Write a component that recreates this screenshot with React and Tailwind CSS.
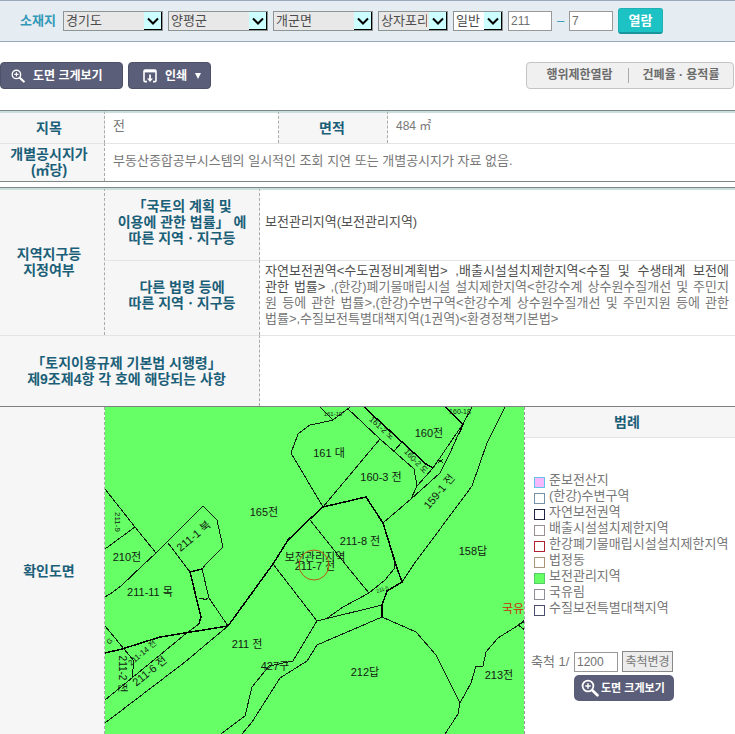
import React from 'react';

const regionSelects = [
  { id: 'sido', label: '시도', value: '경기도', className: 'w-[100px] bg-[#e8e8e8]' },
  { id: 'sigungu', label: '시군구', value: '양평군', className: 'w-[100px] bg-[#e8e8e8]' },
  { id: 'eupmyeon', label: '읍면동', value: '개군면', className: 'w-[100px] bg-[#e8e8e8]' },
  { id: 'ri', label: '리', value: '상자포리', className: 'w-[70px] bg-[#e8e8e8]' },
  { id: 'landType', label: '구분', value: '일반', className: 'w-[50px] bg-white' },
];

const legendItems = [
  { name: '준보전산지', box: 'border-[#62c4ea] bg-[#f5b8fb]' },
  { name: '(한강)수변구역', box: 'border-[#7391a8] bg-white' },
  { name: '자연보전권역', box: 'border-[#1d2440] bg-white' },
  { name: '배출시설설치제한지역', box: 'border-[#998f95] bg-white' },
  { name: '한강폐기물매립시설설치제한지역', box: 'border-[#b02030] bg-white' },
  { name: '법정동', box: 'border-[#a8957c] bg-white' },
  { name: '보전관리지역', box: 'border-[#55cc66] bg-[#66ff66]' },
  { name: '국유림', box: 'border-[#8f8f9c] bg-white' },
  { name: '수질보전특별대책지역', box: 'border-[#4c4c6e] bg-white' },
];

const parcelLines = [
  '105,489 135,527 156,553',
  '105,549 135,527',
  '105,597 113,592 121,586 143,565 156,553 203,506 217,520 223,547 206,564 202,569',
  '168,543 187,568 190,572',
  '202,569 209,598 228,626',
  '199,599 202,598 205,600 208,598',
  '199,624 188,632 105,700',
  '228,626 185,662 105,723',
  '105,626 134,661 132,678',
  '273,564 317,621',
  '310,520 350,570 369,593',
  '383,523 394,560 394,569 385,580 369,593 343,607 326,619',
  '317,621 382,605',
  '402,582 414,564 472,486 487,443 505,407',
  '317,621 293,661 269,666 252,687 245,716 221,734',
  '382,617 317,645 307,661 280,678 252,722 242,734',
  '382,617 416,632 436,655 446,675 460,703 458,714 445,734',
  '460,703 471,683 476,666 483,666 486,652 498,638 525,621',
  '525,620 518,625 525,630',
  '323,507 291,453 298,434 310,425 320,423 333,420 350,407',
  '320,407 333,420',
  '323,507 380,439',
  '347,408 380,439 414,469 417,486 411,499 383,523',
  '411,499 440,473 450,453 463,424 472,407',
  '402,442 394,451',
  '417,486 433,468 452,440 463,424',
  '438,459 443,463',
  '443,459 438,463',
];

const boldLines = [
  '190,572 202,569',
  '105,653 122,649 160,637 228,626',
  '190,572 201,617 199,624',
  '228,626 273,564 288,540 312,517 323,507 366,497 383,523 397,568 402,582 387,591 382,605 382,617',
  '364,407 402,442 426,464 433,468',
  '445,407 463,424 459,434',
];

const parcelLabels = [
  { text: '160전', x: 429, y: 437 },
  { text: '161 대', x: 329, y: 457 },
  { text: '160-3 전', x: 381, y: 481 },
  { text: '165전', x: 264, y: 516 },
  { text: '211-8 전', x: 360, y: 545 },
  { text: '158답', x: 473, y: 555 },
  { text: '210전', x: 127, y: 561 },
  { text: '211-7 전', x: 315, y: 570 },
  { text: '211-11 목', x: 150, y: 596 },
  { text: '211 전', x: 247, y: 648 },
  { text: '427구', x: 275, y: 670 },
  { text: '212답', x: 365, y: 676 },
  { text: '213전', x: 499, y: 679 },
];

const rotatedLabels = [
  { text: '211-1 북', x: 196, y: 539, angle: -40, className: 'text-[11px]' },
  { text: '159-1 전', x: 442, y: 494, angle: -50, className: 'text-[11px]' },
  { text: '211-6 전', x: 152, y: 674, angle: -39, className: 'text-[11px]' },
  { text: '211-2 전', x: 119, y: 674, angle: 90, className: 'text-[10px]' },
  { text: '211-14 전', x: 144, y: 655, angle: -40, className: 'text-[8px]' },
  { text: '161-2 도', x: 380, y: 430, angle: 42, className: 'text-[8px]' },
  { text: '160-2 도', x: 414, y: 463, angle: 47, className: 'text-[8px]' },
  { text: '211-9', x: 115, y: 522, angle: 90, className: 'text-[8px]' },
  { text: '160-18', x: 460, y: 414, angle: 0, className: 'text-[7px]' },
  { text: '161-19', x: 333, y: 416, angle: 0, className: 'text-[6px]' },
  { text: '211-5', x: 383, y: 591, angle: -18, className: 'text-[5px]' },
  { text: 'G', x: 111, y: 643, angle: -40, className: 'text-[7px]' },
];

const ZoomIcon = ({ className }) => (
  <svg className={className} viewBox="0 0 16 16" fill="none" stroke="currentColor">
    <circle cx="6.2" cy="6.2" r="4.8" strokeWidth="1.6" />
    <path d="M6.2 3.8v4.8M3.8 6.2h4.8" strokeWidth="1.3" />
    <path d="M10 10l4.6 4.4" strokeWidth="2.4" strokeLinecap="round" />
  </svg>
);

const PrintIcon = () => (
  <svg className="w-[14px] h-[14px]" viewBox="0 0 14 14" fill="none" stroke="currentColor">
    <path d="M4 12.6H2.2Q1 12.6 1 11.4V2.2Q1 1 2.2 1h9.6Q13 1 13 2.2v9.2q0 1.2-1.2 1.2H10" strokeWidth="1.6" />
    <path d="M1 2.2h12" strokeWidth="2.4" />
    <path d="M7 5.6V11" strokeWidth="1.8" />
    <path d="M4 9.4h6L7 13z" fill="currentColor" stroke="none" />
  </svg>
);

const RegionSelect = ({ id, label, value, className }) => (
  <div className="relative shrink-0">
    <select
      id={id}
      aria-label={label}
      defaultValue={value}
      className={`block appearance-none h-5 border border-[#8c9494] pl-[2px] pr-5 text-[13px] leading-[18px] text-[#4c4c4c] ${className}`}
    >
      <option value={value}>{value}</option>
    </select>
    <span className="absolute top-px right-px w-[18px] h-[18px] pointer-events-none bg-[#ccffff] border-r border-b border-black flex items-center justify-center">
      <svg className="w-3 h-2" viewBox="0 0 12 8" fill="none" stroke="#000" strokeWidth="2">
        <path d="M1 1.5l5 5 5-5" />
      </svg>
    </span>
  </div>
);

const headCell =
  'bg-[#f6f6f6] border-r border-dashed border-r-[#aaaaaa] p-0 text-center text-[14px] leading-4 font-bold text-[#1b6078]';

const SearchBar = () => (
  <form
    className="h-[42px] flex items-center gap-[5px] pl-5 bg-[#e6edf2] border-t border-b border-[#99a8b8]"
    onSubmit={(e) => e.preventDefault()}
  >
    <label htmlFor="sido" className="w-[38px] shrink-0 text-[13px] font-bold text-[#3298b8] whitespace-nowrap">
      소재지
    </label>
    {regionSelects.map((item) => (
      <RegionSelect key={item.id} {...item} />
    ))}
    <input
      aria-label="본번"
      defaultValue="211"
      className="w-11 h-5 shrink-0 border border-[#999999] bg-white px-[2px] text-[12px] leading-4 text-[#707070]"
    />
    <span className="w-[7px] text-center text-[13px] text-[#3298b8]">–</span>
    <input
      aria-label="부번"
      defaultValue="7"
      className="w-11 h-5 shrink-0 border border-[#999999] bg-white px-[2px] text-[12px] leading-4 text-[#707070]"
    />
    <button
      type="submit"
      className="w-[45px] h-[26px] shrink-0 rounded-[3px] border border-[#20b0b4] border-b-2 border-b-[#18949c] bg-[#1cc2c4] text-[13px] leading-5 font-bold text-white"
    >
      열람
    </button>
  </form>
);

const Toolbar = () => (
  <div className="flex items-center justify-between mt-5 h-[27px] pr-px">
    <div className="flex gap-[5px]">
      <button className="w-[123px] h-[27px] flex items-center gap-2 pl-[10px] rounded-[4px] border border-[#4e5168] bg-[#5b5e78] text-[12px] font-bold text-white whitespace-nowrap">
        <ZoomIcon className="w-[14px] h-[14px]" />
        도면 크게보기
      </button>
      <button className="w-[83px] h-[27px] flex items-center gap-2 pl-[14px] rounded-[4px] border border-[#4e5168] bg-[#5b5e78] text-[12px] font-bold text-white whitespace-nowrap">
        <PrintIcon />
        인쇄
        <svg className="w-[6px] h-[6px]" viewBox="0 0 6 6" fill="currentColor">
          <path d="M0 0h6L3 6z" />
        </svg>
      </button>
    </div>
    <div className="w-[208px] h-[27px] flex items-center rounded-[4px] border border-[#c4c4c4] bg-[#f0f0f0] text-[12px] font-bold text-[#6c6c6c] whitespace-nowrap">
      <button className="w-[102px] pl-1 h-[15px] leading-[15px] border-r border-[#aaaaaa]">행위제한열람</button>
      <button className="flex-1 h-[15px] leading-[15px]">건폐율 · 용적률</button>
    </div>
  </div>
);

const LandInfo = () => (
  <table className="w-full mt-[21px] table-fixed border-separate border-spacing-0 border-t border-b border-[#7c8888] text-[13px] text-[#777777]">
    <colgroup>
      <col className="w-[105px]" />
      <col className="w-[174px]" />
      <col className="w-[109px]" />
      <col />
    </colgroup>
    <tbody>
      <tr className="h-8">
        <th scope="row" className={`${headCell} pr-[6px] border-t-2 border-t-[#c9dedd] [border-top-style:solid]`}>지목</th>
        <td className="p-0 pl-2 pt-[3px] align-top leading-5 border-t-2 border-t-[#c9dedd] border-r border-r-[#aaaaaa] [border-right-style:dashed]">
          전
        </td>
        <th scope="row" className={`${headCell} pr-[2px] border-t-2 border-t-[#c9dedd] [border-top-style:solid]`}>면적</th>
        <td className="p-0 pl-2 pt-[3px] align-top leading-5 text-[12px] border-t-2 border-t-[#c9dedd]">484 ㎡</td>
      </tr>
      <tr className="h-[38px]">
        <th scope="row" className={`${headCell} pr-[6px] pb-[2px] border-t border-t-[#e4e4e4] [border-top-style:solid]`}>
          개별공시지가
          <br />
          (㎡당)
        </th>
        <td colSpan="3" className="p-0 pl-2 pb-1 border-t border-t-[#e4e4e4]">
          부동산종합공부시스템의 일시적인 조회 지연 또는 개별공시지가 자료 없음.
        </td>
      </tr>
    </tbody>
  </table>
);

const ZoneInfo = () => (
  <table className="w-full mt-[5px] table-fixed border-separate border-spacing-0 border-t border-[#7c8888] text-[13px] leading-4 text-[#505050]">
    <colgroup>
      <col className="w-[105px]" />
      <col className="w-[155px]" />
      <col />
    </colgroup>
    <tbody>
      <tr className="h-[72px]">
        <th scope="rowgroup" rowSpan="2" className={`${headCell} pr-[6px] pb-[2px] border-t-2 border-t-[#c9dedd] [border-top-style:solid]`}>
          지역지구등
          <br />
          지정여부
        </th>
        <th scope="row" className={`${headCell} pb-[6px] border-t-2 border-t-[#c9dedd] [border-top-style:solid]`}>
          「국토의 계획 및
          <br />
          이용에 관한 법률」 에
          <br />
          따른 지역ㆍ지구등
        </th>
        <td className="p-0 pl-[5px] pb-[6px] border-t-2 border-t-[#c9dedd]">보전관리지역(보전관리지역)</td>
      </tr>
      <tr className="h-[75px]">
        <th scope="row" className={`${headCell} pb-[6px] border-t border-t-[#e4e4e4] [border-top-style:solid]`}>
          다른 법령 등에
          <br />
          따른 지역ㆍ지구등
        </th>
        <td className="p-0 pl-[5px] pr-[6px] pb-[6px] border-t border-t-[#e4e4e4] text-[#777777] whitespace-nowrap">
          <p className="[text-align-last:justify] text-[#505050]">
            자연보전권역&lt;수도권정비계획법&gt; ,배출시설설치제한지역&lt;수질 및 수생태계 보전에
          </p>
          <p className="[text-align-last:justify]">
            <span className="text-[#505050]">관한 법률&gt;</span> ,(한강)폐기물매립시설 설치제한지역&lt;한강수계 상수원수질개선 및 주민지
          </p>
          <p className="[text-align-last:justify]">
            원 등에 관한 법률&gt;,(한강)수변구역&lt;한강수계 상수원수질개선 및 주민지원 등에 관한
          </p>
          <p>법률&gt;,수질보전특별대책지역(1권역)&lt;환경정책기본법&gt;</p>
        </td>
      </tr>
      <tr className="h-[71px]">
        <th scope="row" colSpan="2" className={`${headCell} pr-[6px] border-t border-t-[#e4e4e4] [border-top-style:solid]`}>
          「토지이용규제 기본법 시행령」
          <br />
          제9조제4항 각 호에 해당되는 사항
        </th>
        <td className="p-0 border-t border-t-[#e4e4e4]"></td>
      </tr>
    </tbody>
  </table>
);

const ParcelMap = () => (
  <svg
    className="block w-full h-[327px] bg-[#66ff66]"
    viewBox="105 407 419 327"
    role="img"
    aria-label="확인도면"
  >
    <g fill="none" stroke="#102010" strokeWidth="1" shapeRendering="crispEdges">
      {parcelLines.map((points) => (
        <polyline key={points} points={points} />
      ))}
    </g>
    <g fill="none" stroke="#000" strokeWidth="1.5" shapeRendering="crispEdges">
      {boldLines.map((points) => (
        <polyline key={points} points={points} />
      ))}
    </g>
    <g className="text-[11px]" fill="#102010" textAnchor="middle">
      {parcelLabels.map((item) => (
        <text key={item.text} x={item.x} y={item.y}>{item.text}</text>
      ))}
      {rotatedLabels.map((item) => (
        <text
          key={item.text}
          className={item.className}
          transform={`translate(${item.x} ${item.y}) rotate(${item.angle})`}
        >
          {item.text}
        </text>
      ))}
      <text x="315" y="561">보전관리지역</text>
    </g>
    <circle cx="314" cy="565" r="15" fill="none" stroke="#b85a10" />
    <text x="502" y="613" className="text-[12px]" fill="#c83010">국유</text>
  </svg>
);

const MapSection = () => (
  <table className="w-full table-fixed border-separate border-spacing-0 border-t border-[#7c8080]">
    <colgroup>
      <col className="w-[105px]" />
      <col className="w-[420px]" />
      <col />
    </colgroup>
    <tbody>
      <tr>
        <th scope="row" className={`${headCell} pr-[6px]`}>확인도면</th>
        <td className="p-0 border-r border-dashed border-[#999999]">
          <ParcelMap />
        </td>
        <td className="p-0 align-top text-[13px] leading-4 text-[#777777]">
          <h2 className="h-[31px] pr-[6px] bg-[#f6f6f6] border-b border-[#e4e4e4] text-center text-[14px] leading-[30px] font-bold text-[#1b6078]">
            범례
          </h2>
          <ul className="mt-[34px] pl-[9px]">
            {legendItems.map((item) => (
              <li key={item.name} className="flex items-end gap-1 h-4 whitespace-nowrap">
                <span className={`w-[11px] h-[11px] shrink-0 border ${item.box}`}></span>
                <span className="h-4">{item.name}</span>
              </li>
            ))}
          </ul>
          <form className="mt-[35px] pl-[6px]" onSubmit={(e) => e.preventDefault()}>
            <div className="flex items-center">
              <label htmlFor="scale" className="w-[43px]">축척 1/</label>
              <input
                id="scale"
                defaultValue="1200"
                className="w-11 h-5 border border-[#999999] bg-white px-[2px] text-[12px] leading-4 text-[#707070]"
              />
              <button
                type="submit"
                className="w-[51px] h-[21px] ml-1 border border-[#888888] bg-[#ececec] text-[12px] leading-4 text-[#777777] whitespace-nowrap"
              >
                축척변경
              </button>
            </div>
            <button
              type="button"
              className="w-[100px] h-[26px] mt-[3px] ml-[43px] flex items-center gap-[2px] pl-[7px] rounded-[5px] bg-[#5b5e78] text-[11px] font-bold text-white whitespace-nowrap"
            >
              <ZoomIcon className="w-[18px] h-[18px]" />
              도면 크게보기
            </button>
          </form>
        </td>
      </tr>
    </tbody>
  </table>
);

const App = () => {
  return (
    <div className="bg-white overflow-hidden font-['Liberation_Sans','Noto_Sans_CJK_KR',sans-serif]">
      <SearchBar />
      <Toolbar />
      <LandInfo />
      <ZoneInfo />
      <MapSection />
    </div>
  );
};

export default App;
